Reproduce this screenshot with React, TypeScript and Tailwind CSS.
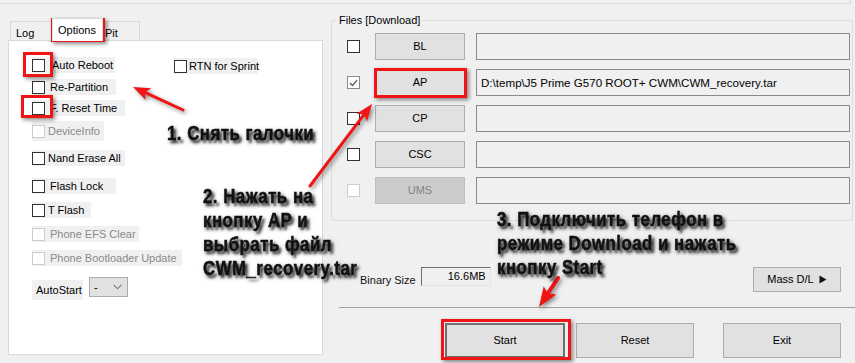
import React from 'react';

function Check({ checked = false, disabled = false }: { checked?: boolean; disabled?: boolean }) {
    return (
        <span
            className={`w-[13px] h-[13px] shrink-0 border bg-white flex items-center justify-center ${
                disabled ? 'border-[#cccccc]' : checked ? 'border-[#8a8a8a]' : 'border-[#333333]'
            }`}
        >
            {checked && (
                <svg width="9" height="8" viewBox="0 0 9 8">
                    <path d="M1 4 L3.5 6.5 L8 1.2" fill="none" stroke="#555" strokeWidth="1.2" />
                </svg>
            )}
        </span>
    );
}

function Opt({ label, w, disabled = false, gap = 'ml-[5px]', className = '' }: {
    label: string;
    w: string;
    disabled?: boolean;
    gap?: string;
    className?: string;
}) {
    return (
        <div className={`h-[16px] flex items-center bg-[#f0f0f0] whitespace-nowrap ${w} ${className}`}>
            <Check disabled={disabled} />
            <span className={`${gap} leading-none ${disabled ? 'text-[#8a8a8a]' : 'text-black'}`}>{label}</span>
        </div>
    );
}

function WinButton({ label, w, h, disabled = false, focused = false, className = '' }: {
    label: string;
    w: string;
    h: string;
    disabled?: boolean;
    focused?: boolean;
    className?: string;
}) {
    return (
        <div
            className={`${w} ${h} shrink-0 flex items-center justify-center ${
                disabled
                    ? 'bg-[#cccccc] border border-[#bfbfbf] text-[#838383]'
                    : focused
                        ? 'bg-[#e1e1e1] border-2 border-[#707070] text-black'
                        : 'bg-[#e1e1e1] border border-[#adadad] text-black'
            } ${className}`}
        >
            {label}
        </div>
    );
}

function FileRow({ name, path = '', checked = false, disabled = false }: {
    name: string;
    path?: string;
    checked?: boolean;
    disabled?: boolean;
}) {
    return (
        <div className="h-[27px] flex items-center pl-[15px]">
            <Check checked={checked} disabled={disabled} />
            <WinButton label={name} w="w-[90px]" h="h-[27px]" disabled={disabled} className="ml-[15px]" />
            <div className="ml-[11px] w-[374px] h-[27px] border border-[#8a8a8a] bg-[#f0f0f0] px-[4px] pt-[4px] text-[11.6px] text-black">
                {path}
            </div>
        </div>
    );
}

function Arrow({ x1, y1, x2, y2, head = 17, hw = 13, sw = 3 }: {
    x1: number; y1: number; x2: number; y2: number; head?: number; hw?: number; sw?: number;
}) {
    const dx = x2 - x1;
    const dy = y2 - y1;
    const len = Math.hypot(dx, dy);
    const ux = dx / len;
    const uy = dy / len;
    const bx = x2 - ux * head;
    const by = y2 - uy * head;
    const px = -uy * (hw / 2);
    const py = ux * (hw / 2);
    const pts = `${x2},${y2} ${bx + px},${by + py} ${bx + ux * 4},${by + uy * 4} ${bx - px},${by - py}`;
    return (
        <g>
            <line x1={x1} y1={y1} x2={bx + ux * 4} y2={by + uy * 4} stroke="#f01414" strokeWidth={sw} strokeLinecap="round" />
            <polygon points={pts} fill="#f01414" />
        </g>
    );
}

// no narrow font installed, so squeeze Liberation Sans bold
const note =
    "origin-top-left scale-x-[0.84] whitespace-nowrap font-['Liberation_Sans',Arial,sans-serif] font-bold text-[20px] leading-[24px] tracking-[0.6px] text-[#111] [-webkit-text-stroke:0.5px_#111] [text-shadow:3px_3px_3px_rgba(0,0,0,0.8),2px_2px_6px_rgba(0,0,0,0.55)]";
const redBox = 'absolute border-[3px] border-[#f01414] shadow-[2px_2px_4px_rgba(0,0,0,0.45)]';

export default function App() {
    return (
        <div className="relative w-[855px] h-[363px] overflow-hidden bg-[#f0f0f0] font-['Liberation_Sans',Arial,sans-serif] text-[11px]">
            <div className="h-[4px] w-[851px] border-b border-r border-[#dcdcdc]" />

            <div className="flex">
                {/* left: tabs */}
                <div className="ml-[8px] w-[315px] mt-[14px]">
                    <div className="h-[22px] flex items-end pl-[2px]">
                        <div className="w-[42px] h-[19px] border border-b-0 border-[#d9d9d9] bg-[#f0f0f0] pl-[5px] pt-[3px]">Log</div>
                        <div className="relative z-10 w-[51px] h-[23px] -mb-[1px] border border-b-0 border-[#d9d9d9] bg-white pl-[5px] pt-[3px]">Options</div>
                        <div className="w-[37px] h-[19px] border border-b-0 border-l-0 border-[#d9d9d9] bg-[#f0f0f0] pl-[2px] pt-[3px]">Pit</div>
                    </div>
                    <div className="h-[315px] border border-[#d9d9d9] bg-white pl-[23px] pt-[16px]">
                        <div className="flex">
                            <Opt label="Auto Reboot" w="w-[83px]" gap="ml-[7px]" />
                            <Opt label="RTN for Sprint" w="w-[84px]" gap="ml-[2px]" className="ml-[59px] mt-[1px]" />
                        </div>
                        <Opt label="Re-Partition" w="w-[84px]" className="mt-[5px]" />
                        <Opt label="F. Reset Time" w="w-[93px]" className="mt-[5px]" />
                        <Opt label="DeviceInfo" w="w-[72px]" gap="ml-[3px]" disabled className="mt-[5px] h-[20px]" />
                        <Opt label="Nand Erase All" w="w-[93px]" gap="ml-[3px]" className="mt-[9px]" />
                        <Opt label="Flash Lock" w="w-[84px]" className="mt-[12px]" />
                        <Opt label="T Flash" w="w-[59px]" gap="ml-[3px]" className="mt-[8px]" />
                        <Opt label="Phone EFS Clear" w="w-[107px]" disabled className="mt-[8px]" />
                        <Opt label="Phone Bootloader Update" w="w-[150px]" disabled className="mt-[8px]" />
                        <div className="flex items-start mt-[11px]">
                            <div className="mt-[3px] w-[51px] h-[20px] bg-[#f0f0f0] flex items-center pl-[4px]">AutoStart</div>
                            <div className="ml-[6px] w-[39px] h-[20px] border border-[#adadad] bg-[#e1e1e1] flex items-center justify-between pl-[4px] pr-[5px]">
                                <span>-</span>
                                <svg width="9" height="6" viewBox="0 0 9 6">
                                    <path d="M0.5 0.8 L4.5 4.8 L8.5 0.8" fill="none" stroke="#444" strokeWidth="1" />
                                </svg>
                            </div>
                        </div>
                    </div>
                </div>

                {/* right: files */}
                <div className="ml-[8px] w-[524px] flex flex-col">
                    <fieldset className="mt-[10px] w-[522px] h-[207px] border border-[#dcdcdc] rounded-[2px] pt-[6px]">
                        <legend className="ml-[5px] px-[2px] leading-[13px] text-black">Files [Download]</legend>
                        <div className="flex flex-col gap-[9px]">
                            <FileRow name="BL" />
                            <FileRow name="AP" checked path="D:\temp\J5 Prime G570 ROOT+ CWM\CWM_recovery.tar" />
                            <FileRow name="CP" />
                            <FileRow name="CSC" />
                            <FileRow name="UMS" disabled />
                        </div>
                    </fieldset>

                    <div className="mt-[46px] h-[25px] flex items-start">
                        <span className="ml-[29px] mt-[5px] text-[#111]">Binary Size</span>
                        <div className="ml-[5px] w-[70px] h-[19px] border-t border-l border-[#6d6d6d] border-b border-r border-b-[#e3e3e3] border-r-[#e3e3e3] bg-[#f0f0f0] flex items-center justify-end pr-[4px]">
                            16.6MB
                        </div>
                        <div className="ml-auto mr-[14px] w-[88px] h-[25px] bg-[#e1e1e1] border border-[#adadad] flex items-center justify-center gap-[5px]">
                            <span>Mass D/L</span>
                            <svg width="8" height="9" viewBox="0 0 8 9">
                                <path d="M0.5 0.5 L7.5 4.5 L0.5 8.5 Z" fill="#111" />
                            </svg>
                        </div>
                    </div>

                    <div className="mt-[15px] ml-[8px] border-t border-[#a0a0a0]" />

                    <div className="mt-[15px] flex">
                        <WinButton label="Start" w="w-[120px]" h="h-[35px]" focused className="ml-[114px]" />
                        <WinButton label="Reset" w="w-[118px]" h="h-[35px]" className="ml-[11px]" />
                        <WinButton label="Exit" w="w-[118px]" h="h-[35px]" className="ml-[29px]" />
                    </div>
                </div>
            </div>

            {/* annotations */}
            <div className="absolute inset-0 pointer-events-none">
                <div className={`${redBox} left-[51px] top-[18px] w-[54px] h-[24px]`} />
                <div className={`${redBox} left-[23px] top-[52px] w-[30px] h-[25px]`} />
                <div className={`${redBox} left-[21px] top-[95px] w-[32px] h-[23px]`} />
                <div className={`${redBox} left-[374px] top-[68px] w-[93px] h-[30px]`} />
                <div className={`${redBox} left-[441px] top-[319px] w-[130px] h-[41px]`} />

                <svg className="absolute left-0 top-0 drop-shadow-[2px_2px_2px_rgba(0,0,0,0.45)]" width="855" height="363" viewBox="0 0 855 363">
                    <Arrow x1={183} y1={110} x2={133} y2={87} />
                    <Arrow x1={310} y1={186} x2={372} y2={104} />
                    <Arrow x1={558} y1={278} x2={539} y2={307} head={20} hw={15} sw={4} />
                </svg>

                <div className={`absolute left-[167px] top-[121px] ${note}`}>1. Снять галочки</div>
                <div className={`absolute left-[203px] top-[184px] ${note}`}>
                    2. Нажать на<br />кнопку AP и<br />выбрать файл<br />CWM_recovery.tar
                </div>
                <div className={`absolute left-[497px] top-[207px] ${note}`}>
                    3. Подключить телефон в<br />режиме Download и нажать<br />кнопку Start
                </div>
            </div>
        </div>
    );
}
